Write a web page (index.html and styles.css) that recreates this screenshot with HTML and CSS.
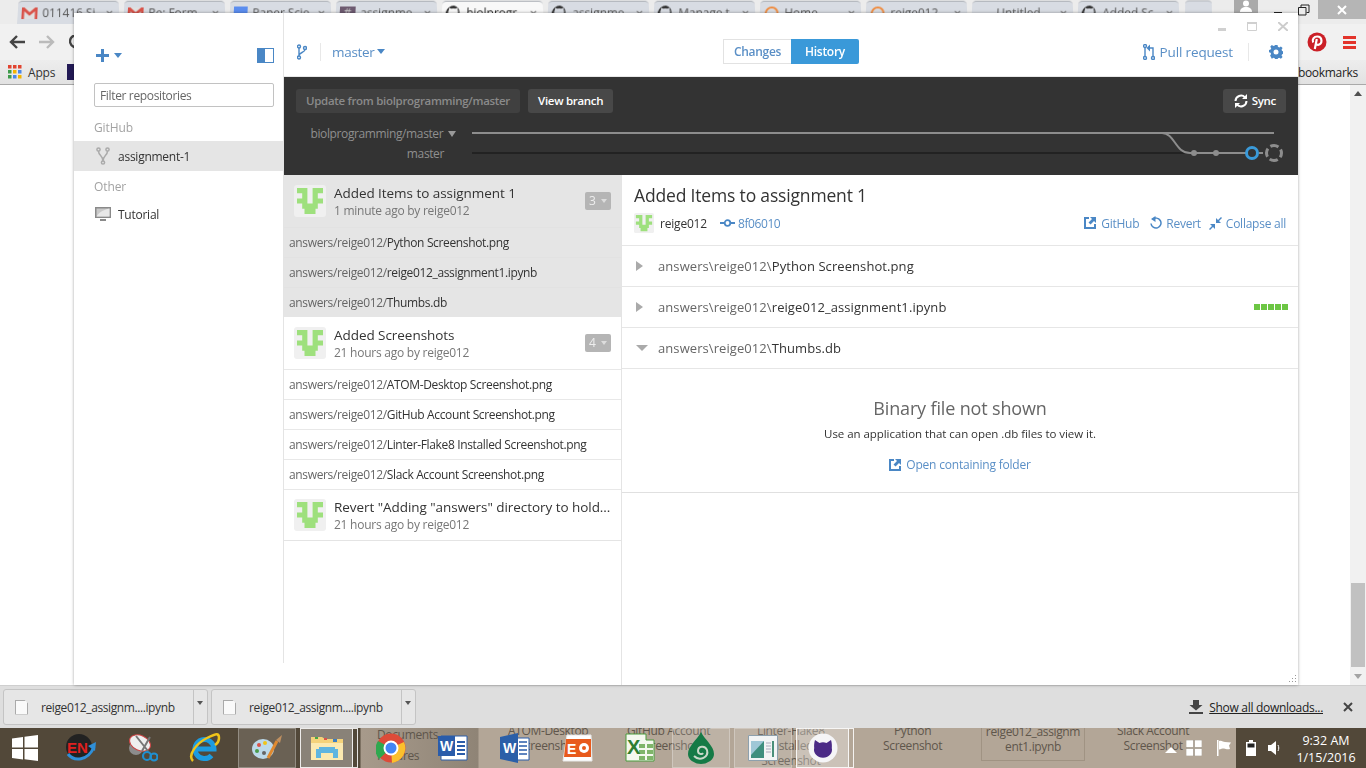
FILE: index.html
```html
<!DOCTYPE html>
<html lang="en">
<head>
<meta charset="utf-8">
<title>GitHub Desktop</title>
<link rel="stylesheet" href="styles.css">
</head>
<body>
<svg class="defs" width="0" height="0" aria-hidden="true">
  <defs>
    <symbol id="identicon" viewBox="0 0 32 32">
      <rect width="32" height="32" rx="3" fill="#f0f0f0"/>
      <path fill="#9ee07d" d="M3 3h10.400v5.200H3zM3 13.400h10.400v5.200H3zM18.600 3H29v5.200H18.600zM18.600 13.400H29v5.200H18.600zM8.200 3h5.200v20.800H8.200zM18.600 3h5.200v20.800h-5.200zM8.200 18.600h15.600v5.200H8.200zM10.500 23.800h11V29h-11z"/>
    </symbol>
    <symbol id="gh" viewBox="0 0 16 16">
      <path fill="#333" d="M8 0a8 8 0 0 0-2.500 15.600V13c-2.200.5-2.700-1-2.700-1-.4-.9-.9-1.200-.9-1.200-.7-.5.100-.5.100-.5.800.1 1.200.8 1.200.8.700 1.200 1.900.9 2.300.7.100-.5.300-.9.500-1.100-1.800-.2-3.600-.9-3.600-4 0-.9.300-1.600.8-2.100-.1-.2-.4-1 .1-2.100 0 0 .7-.2 2.200.8a7.600 7.600 0 0 1 4 0c1.500-1 2.200-.8 2.200-.8.400 1.100.2 1.900.1 2.100.5.600.8 1.300.8 2.100 0 3.100-1.900 3.700-3.700 3.900.3.300.6.800.6 1.500v2.900A8 8 0 0 0 8 0z"/>
    </symbol>
    <symbol id="gm" viewBox="0 0 16 12">
      <path fill="#e0e0e0" d="M0 0h16v12H0z"/>
      <path fill="#d9534a" d="M0 0h2.500L8 5l5.500-5H16v12h-2.600V4L8 8.800 2.600 4v8H0z"/>
    </symbol>
    <symbol id="arc" viewBox="0 0 16 16">
      <path fill="none" stroke="#f08a3c" stroke-width="2" d="M2 8a6 6 0 0 1 12 0"/>
    </symbol>
  </defs>
</svg>

<header class="tabstrip">
  <div class="tabs">
    <div class="tab"><svg class="tab-icon" width="16" height="14"><use href="#gm"/></svg><span class="tab-text">011416 Si</span><span class="tab-x">✕</span></div>
    <div class="tab"><svg class="tab-icon" width="16" height="14"><use href="#gm"/></svg><span class="tab-text">Re: Form</span><span class="tab-x">✕</span></div>
    <div class="tab"><span class="tab-doc"></span><span class="tab-text">Paper Scie</span><span class="tab-x">✕</span></div>
    <div class="tab"><span class="tab-slack">#</span><span class="tab-text">assignme</span><span class="tab-x">✕</span></div>
    <div class="tab tab-active"><svg class="tab-icon" width="16" height="16"><use href="#gh"/></svg><span class="tab-text">biolprogr</span><span class="tab-x">✕</span></div>
    <div class="tab"><svg class="tab-icon" width="16" height="16"><use href="#gh"/></svg><span class="tab-text">assignme</span><span class="tab-x">✕</span></div>
    <div class="tab"><svg class="tab-icon" width="16" height="16"><use href="#gh"/></svg><span class="tab-text">Manage t</span><span class="tab-x">✕</span></div>
    <div class="tab"><svg class="tab-icon" width="16" height="16"><use href="#arc"/></svg><span class="tab-text">Home</span><span class="tab-x">✕</span></div>
    <div class="tab"><svg class="tab-icon" width="16" height="16"><use href="#arc"/></svg><span class="tab-text">reige012</span><span class="tab-x">✕</span></div>
    <div class="tab"><span class="tab-blank"></span><span class="tab-text">Untitled</span><span class="tab-x">✕</span></div>
    <div class="tab"><svg class="tab-icon" width="16" height="16"><use href="#gh"/></svg><span class="tab-text">Added Sc</span><span class="tab-x">✕</span></div>
    <div class="tab tab-new"></div>
  </div>
  <div class="winctl">
    <div class="winctl-user"><svg width="12" height="12" viewBox="0 0 12 12"><circle cx="6" cy="3.500" r="3" fill="#fff"/><path fill="#fff" d="M0 12c0-3.500 2.500-5 6-5s6 1.500 6 5z"/></svg></div>
    <div class="winctl-btn"><svg width="12" height="12" viewBox="0 0 12 12"><path fill="#222" d="M2 8h8v2H2z"/></svg></div>
    <div class="winctl-btn"><svg width="12" height="12" viewBox="0 0 12 12"><path fill="none" stroke="#222" d="M.5 3.500h7.500v7.500H.5zM3 3V1h8v7.500H8.500"/></svg></div>
    <div class="winctl-close"><svg width="10" height="10" viewBox="0 0 10 10"><path stroke="#fff" stroke-width="2" d="M1 1l8 8M9 1l-8 8"/></svg></div>
  </div>
</header>

<nav class="toolbar">
  <div class="nav-left">
    <svg width="16" height="14" viewBox="0 0 16 14"><path fill="none" stroke="#444" stroke-width="2.400" d="M16 7H2M8 1L2 7l6 6"/></svg>
    <svg width="16" height="14" viewBox="0 0 16 14"><path fill="none" stroke="#bbb" stroke-width="2.400" d="M0 7h14M8 1l6 6-6 6"/></svg>
    <svg width="14" height="14" viewBox="0 0 14 14"><path fill="none" stroke="#444" stroke-width="2.400" d="M12 3a6 6 0 1 0 1 4"/></svg>
  </div>
  <div class="nav-right">
    <svg width="20" height="20" viewBox="0 0 20 20"><circle cx="10" cy="10" r="9.500" fill="#cb2027"/><path fill="none" stroke="#fff" stroke-width="2.200" d="M6.200 10.500c-1.500-3 .8-6 4-6 5.500 0 5.500 8 1 8.300-1.200 0-2-.7-2-1.300M9.800 7l-2 10"/></svg>
    <svg width="14" height="14" viewBox="0 0 14 14"><path fill="#e3342b" d="M0 1h13v3H0zM0 6h13v3H0zM0 11h13v3H0z"/></svg>
  </div>
</nav>

<nav class="bookmarks">
  <div class="bm-left">
    <svg width="14" height="14" viewBox="0 0 14 14"><path fill="#e1432f" d="M0 0h3.500v3.500H0z"/><path fill="#e1432f" d="M5 0h3.500v3.500H5z"/><path fill="#e1432f" d="M10 0h3.500v3.500H10z"/><path fill="#3f9b4b" d="M0 5h3.500v3.500H0z"/><path fill="#f4b400" d="M5 5h3.500v3.500H5z"/><path fill="#4a86e8" d="M10 5h3.500v3.500H10z"/><path fill="#3f9b4b" d="M0 10h3.500v3.500H0z"/><path fill="#4a86e8" d="M5 10h3.500v3.500H5z"/><path fill="#f4b400" d="M10 10h3.500v3.500H10z"/></svg>
    <span>Apps</span>
    <span class="bm-fav"></span>
  </div>
  <span class="bm-right">bookmarks</span>
</nav>

<main class="page">
  <div class="page-body"></div>
  <div class="scrollbar">
    <span class="sb-up"></span>
    <span class="sb-thumb"></span>
    <span class="sb-down"></span>
  </div>
</main>

<footer class="downloads">
  <div class="dl-item"><span class="dl-file"></span><span class="dl-name">reige012_assignm....ipynb</span><span class="dl-more"></span></div>
  <div class="dl-item"><span class="dl-file"></span><span class="dl-name">reige012_assignm....ipynb</span><span class="dl-more"></span></div>
  <div class="dl-spacer"></div>
  <svg class="dl-icon" width="14" height="14" viewBox="0 0 14 14"><path fill="#444" d="M4 0h6v5h3.500L7 10.500.5 5H4zM0 12h14v2H0z"/></svg>
  <a class="dl-all">Show all downloads...</a>
  <svg class="dl-close" width="10" height="10" viewBox="0 0 10 10"><path stroke="#444" stroke-width="2" d="M1 1l8 8M9 1l-8 8"/></svg>
</footer>

<div class="taskbar">
  <div class="desktop">
    <span class="dt dt-docs">Documents</span>
    <span class="dt dt-pics">Pictures</span>
    <span class="dt dt-atom">ATOM-Desktop<br>Screenshot</span>
    <span class="dt dt-gh">GitHub Account<br>Screenshot</span>
    <span class="dt dt-lint">Linter-Flake8<br>Installed<br>Screenshot</span>
    <span class="dt dt-py">Python<br>Screenshot</span>
    <span class="dt dt-ipy">reige012_assignm<br>ent1.ipynb</span>
    <span class="dt dt-slack">Slack Account<br>Screenshot</span>
  </div>
  <div class="task-icons">
    <div class="ti ti-win"><svg width="26" height="26" viewBox="0 0 26 26"><path fill="#fff" d="M0 3.500l11-1.500v10.500H0zM12.500 1.800L26 0v12.500H12.500zM0 14h11v10.500L0 23zM12.500 14H26v12l-13.500-1.800z"/></svg></div>
    <div class="ti"><svg width="32" height="30" viewBox="0 0 32 30"><circle cx="14" cy="14" r="13" fill="#222"/><path fill="none" stroke="#2f8fd8" stroke-width="3" d="M3 21c6 8 20 7 26-7"/><path fill="#2f8fd8" d="M31 9l-1 9-7-5z"/><text x="2" y="20" class="ti-en">EN</text></svg></div>
    <div class="ti"><svg width="30" height="30" viewBox="0 0 30 30"><ellipse cx="8" cy="15" rx="7" ry="7" fill="#8c8c8c"/><ellipse cx="12" cy="10" rx="11" ry="7.500" transform="rotate(25 12 10)" fill="#efefef" stroke="#c44"/><path stroke="#777" stroke-width="2" d="M8 3l12 15M22 4l-8 14"/><circle cx="19" cy="23" r="4" fill="none" stroke="#1f8fd0" stroke-width="2.200"/><circle cx="26" cy="24" r="3.500" fill="none" stroke="#1f8fd0" stroke-width="2.200"/></svg></div>
    <div class="ti"><svg width="32" height="30" viewBox="0 0 32 30"><path fill="none" stroke="#1c9ce0" stroke-width="5" d="M7 16h18a9.500 9.500 0 1 0-2.500 6.500"/><path fill="none" stroke="#f0c419" stroke-width="2.500" d="M4 28C-2 22 8 10 18 5s12-5 12 0-3 6-4 7"/></svg></div>
    <div class="ti ti-open"><svg width="32" height="28" viewBox="0 0 32 28"><ellipse cx="12" cy="15" rx="11" ry="10" fill="#bcd9ea"/><circle cx="8" cy="11" r="2" fill="#d9534a"/><circle cx="14" cy="9" r="2" fill="#f0c419"/><circle cx="6" cy="17" r="2" fill="#4a9b4b"/><circle cx="13" cy="19" r="2" fill="#666"/><path stroke="#e08a30" stroke-width="3" d="M17 24l9-17"/><path fill="#c09060" d="M25 6l6-5-2 8z"/></svg></div>
    <div class="ti ti-active"><svg width="32" height="28" viewBox="0 0 32 28"><path fill="#f4d27a" d="M0 3h11l3 2h18v21H0z"/><path fill="#fbe9b0" d="M0 9h32v17H0z"/><path fill="#5fb5e0" d="M8 13h16v2H8zM5 15h22v9h-5v-5H10v5H5z"/><path fill="#45a645" d="M4 3h3v2H4z"/><path fill="#d9534a" d="M13 4h3v2h-3z"/><path fill="#3c7fc2" d="M22 5h4v3h-4z"/></svg></div>
    <div class="ti"><svg width="30" height="30" viewBox="0 0 30 30"><circle cx="15" cy="15" r="14.500" fill="#dd4b39"/><path fill="#2fa84f" d="M15 15L3 26A15 15 0 0 1 2 8z"/><path fill="#fbc02d" d="M15 15l13-6a15 15 0 0 1-12 21z"/><circle cx="15" cy="15" r="7.500" fill="#fff"/><circle cx="15" cy="15" r="5.500" fill="#4285f4"/></svg></div>
    <div class="ti"><svg width="30" height="30" viewBox="0 0 30 30"><path fill="#fff" stroke="#2a5caa" d="M3 3h26v24H3z"/><path fill="#2a5caa" d="M0 3h17v20H0z"/><text x="2" y="18" class="ti-letter">W</text><path stroke="#2a5caa" stroke-width="2" d="M19 9h8M19 13h8M19 17h8M19 21h8"/></svg></div>
    <div class="ti"><svg width="30" height="30" viewBox="0 0 30 30"><path fill="#fff" stroke="#2a5caa" d="M12 5h17v22H12z"/><path fill="#2b5fa8" d="M0 4l18-4v30L0 26z"/><text x="3" y="20" class="ti-letter">W</text><path stroke="#2a5caa" stroke-width="1.500" d="M19 9h8M19 13h8M19 17h8M19 21h8"/></svg></div>
    <div class="ti"><svg width="32" height="30" viewBox="0 0 32 30"><path fill="#fff" stroke="#e8e8e8" d="M6 2h24l1 26H2z"/><path fill="#e85a1c" d="M5 6h25v18H3z"/><text x="6" y="21" class="ti-letter">E</text><circle cx="23" cy="15" r="5" fill="#fff"/><circle cx="23" cy="15" r="2" fill="#e85a1c"/></svg></div>
    <div class="ti"><svg width="32" height="30" viewBox="0 0 32 30"><path fill="#f4f8ef" stroke="#4a9b3c" d="M3 1h20v6h8v21H3z"/><path fill="#7fb56a" d="M16 11h6v4h-6zM24 11h6v4h-6zM16 17h6v4h-6zM24 17h6v4h-6zM16 23h6v4h-6zM24 23h6v4h-6z"/><text x="4" y="21" class="ti-letter ti-x">X</text></svg></div>
    <div class="ti ti-open"><svg width="26" height="32" viewBox="0 0 26 32"><path fill="#157a46" d="M13 0c4 8 13 14 13 22a13 10 0 0 1-26 0C0 14 9 8 13 0z"/><path fill="none" stroke="#c8d8c8" stroke-width="2" d="M6 24c6 6 15 1 13-6-2-5-9-4-9 1 0 3 4 4 5 2"/></svg></div>
    <div class="ti ti-open"><svg width="30" height="26" viewBox="0 0 30 26"><path fill="#f2f4f5" stroke="#8da0ad" d="M.5.5h29v25H.5z"/><path fill="#3f8f7e" d="M3 6h13v17H3z"/><path fill="#9fc7d6" d="M3 6h13L3 20z"/><path stroke="#4a8f7a" stroke-width="2" d="M25 6v16"/><path stroke="#aab" d="M18 8h5M18 11h5M18 14h5M18 17h5"/></svg></div>
    <div class="ti ti-active"><svg width="30" height="30" viewBox="0 0 30 30"><circle cx="15" cy="15" r="14.500" fill="#f5f5f7"/><path fill="#4b2a86" d="M7 7l4.500 3a10 10 0 0 1 7 0L23 7c1 3 1 6 .8 8a9 8 0 1 1-17.600 0c-.2-2-.2-5 .8-8z"/></svg></div>
  </div>
  <div class="tray-light">
    <svg class="tray-caret" width="12" height="6" viewBox="0 0 12 6"><path fill="#fff" d="M6 0l6 6H0z"/></svg>
    <svg width="16" height="16" viewBox="0 0 16 16"><path fill="#fff" stroke="#8b8072" stroke-width=".500" d="M0 0h7.500v7.500H0zM8.500 0H16v7.500H8.500zM0 8.500h7.500V16H0zM8.500 8.500H16V16H8.500z"/></svg>
    <svg width="16" height="16" viewBox="0 0 16 16"><path fill="#fff" d="M1 0h1.500v16H1z"/><path fill="#fff" d="M3 1c3-1 4 1 6 1l6 .5-2 3 1 3.500c-3 .5-4 0-6-.5-2 0-3 .5-5 1z"/></svg>
  </div>
  <div class="tray-dark">
    <svg width="10" height="16" viewBox="0 0 10 16"><path fill="#fff" d="M3 0h4v2h3v14H0V2h3z"/><path fill="#222" d="M1.500 3.500h7v4h-7z"/></svg>
    <svg width="14" height="14" viewBox="0 0 14 14"><path fill="#fff" d="M0 4h3l5-4v14l-5-4H0z"/><path fill="none" stroke="#fff" d="M10 4c1 2 1 4 0 6"/></svg>
    <div class="clock"><span>9:32 AM</span><span>1/15/2016</span></div>
  </div>
</div>

<section class="app">
  <aside class="sidebar">
    <div class="side-top">
      <div class="add"><svg width="13" height="13" viewBox="0 0 13 13"><path fill="#4a87c5" d="M5 0h3v5h5v3H8v5H5V8H0V5h5z"/></svg><span class="caret caret-blue"></span></div>
      <svg width="17" height="15" viewBox="0 0 17 15"><path fill="#4a87c5" d="M0 0h17v15H0z"/><path fill="#fff" d="M8 1h8v13H8z"/></svg>
    </div>
    <div class="filter">Filter repositories</div>
    <div class="group">GitHub</div>
    <div class="repo repo-on">
      <svg width="14" height="18" viewBox="0 0 14 18"><g fill="none" stroke="#aaa" stroke-width="1.500"><circle cx="2.500" cy="2.500" r="1.600"/><circle cx="11.500" cy="2.500" r="1.600"/><circle cx="7" cy="15.500" r="1.600"/><path d="M2.500 4c0 5 4.500 4 4.500 10M11.500 4C11.500 9 7 8 7 14"/></g></svg>
      <span>assignment-1</span>
    </div>
    <div class="group group-other">Other</div>
    <div class="repo">
      <svg width="16" height="14" viewBox="0 0 16 14"><path fill="#8a8a8a" d="M0 0h16v11H0z"/><path fill="#c9c9c9" d="M1.500 1.500h13v8h-13z"/><path fill="#e8e8e8" d="M1.500 9.500c3-5 8-7 13-8v8z"/><path fill="#8a8a8a" d="M5 12h6v2H5z"/></svg>
      <span>Tutorial</span>
    </div>
  </aside>

  <div class="main">
    <div class="appbar">
      <svg class="branch-ico" width="10" height="16" viewBox="0 0 10 16"><g fill="none" stroke="#4a87c5" stroke-width="1.400"><circle cx="2" cy="2.500" r="1.500"/><circle cx="8" cy="4" r="1.500"/><circle cx="2" cy="13.500" r="1.500"/><path d="M2 4v8M8 5.500c0 3-6 3-6 6"/></g></svg>
      <span class="bar-div"></span>
      <span class="branch">master</span><span class="caret caret-blue caret-sm"></span>
      <div class="seg">
        <span class="seg-a">Changes</span>
        <span class="seg-b">History</span>
      </div>
      <div class="bar-right">
        <svg width="12" height="16" viewBox="0 0 12 16"><g fill="none" stroke="#4a87c5" stroke-width="1.400"><circle cx="2" cy="14" r="1.500"/><circle cx="10" cy="14" r="1.500"/><circle cx="2" cy="2" r="1.500"/><path d="M2 3.500v9M10 12.500V4H6"/></g><path fill="#4a87c5" d="M7 .5v7L3.500 4z"/></svg>
        <span class="pull">Pull request</span>
        <span class="bar-div bar-div2"></span>
        <svg width="14" height="14" viewBox="0 0 14 14"><path fill="#4a87c5" d="M5.700 0h2.600l.4 2 1.400.6L11.900 1.500l1.800 1.800-1.100 1.800.6 1.400 2 .4-.1 2.600-1.900.4-.6 1.400 1.100 1.700-1.800 1.800-1.800-1.100-1.400.6-.4 1.900H5.700l-.4-1.900-1.400-.6-1.800 1.100L.3 11.400l1.100-1.700L.8 8.300-1 7.900V5.300l1.900-.4.600-1.400L.4 1.800 2.100 0l1.800 1.100 1.400-.6z" transform="scale(.93) translate(.9 0)"/><circle cx="7" cy="7" r="2.500" fill="#fff"/></svg>
      </div>
      <div class="appctl">
        <svg class="ctl-min" width="8" height="3" viewBox="0 0 8 3"><path fill="#d0d0d0" d="M0 0h8v3H0z"/></svg>
        <svg width="10" height="9" viewBox="0 0 10 9"><path fill="none" stroke="#d0d0d0" d="M.5 1.500h9v7h-9z"/><path fill="#d0d0d0" d="M0 0h10v2H0z"/></svg>
        <svg width="10" height="9" viewBox="0 0 10 9"><path stroke="#ccc" stroke-width="2" d="M0 0l10 9M10 0L0 9"/></svg>
      </div>
    </div>

    <div class="darkbar">
      <div class="dark-btns">
        <span class="dbtn dbtn-off">Update from biolprogramming/master</span>
        <span class="dbtn">View branch</span>
        <span class="dbtn dbtn-sync"><svg width="14" height="14" viewBox="0 0 14 14"><path fill="none" stroke="#fff" stroke-width="2" d="M1.500 7a5.500 5.500 0 0 1 9.500-3.600M12.500 7A5.500 5.500 0 0 1 3 10.600"/><path fill="#fff" d="M13 0v5H8zM1 14V9h5z"/></svg>Sync</span>
      </div>
      <div class="graph">
        <div class="graph-labels">
          <span>biolprogramming/master <i class="caret caret-grey"></i></span>
          <span class="graph-master">master</span>
        </div>
        <svg class="graph-svg" width="826" height="36" viewBox="0 0 826 36">
          <path fill="none" stroke="#222" stroke-width="2" d="M0 26h720"/>
          <path fill="none" stroke="#8d8d8d" stroke-width="2" d="M0 6h802M690 6c13 0 13 20 28 20h56"/>
          <circle cx="722" cy="26" r="3" fill="#8d8d8d"/>
          <circle cx="744" cy="26" r="3" fill="#8d8d8d"/>
          <circle cx="780" cy="26" r="5.500" fill="#333" stroke="#3a9ad9" stroke-width="3"/>
          <path stroke="#8d8d8d" stroke-width="2" d="M787 26h4"/>
          <circle class="graph-next" cx="802" cy="26" r="7.500" fill="#333" stroke="#8d8d8d" stroke-width="3"/>
        </svg>
      </div>
    </div>

    <div class="panes">
      <div class="commits">
        <article class="commit commit-on">
          <svg class="avatar" width="32" height="32"><use href="#identicon"/></svg>
          <div class="commit-text"><div class="commit-title">Added Items to assignment 1</div><div class="commit-sub">1 minute ago by reige012</div></div>
          <span class="count">3 <i class="caret caret-white"></i></span>
        </article>
        <div class="files files-on">
          <div class="file"><span class="dim">answers/reige012/</span>Python Screenshot.png</div>
          <div class="file"><span class="dim">answers/reige012/</span>reige012_assignment1.ipynb</div>
          <div class="file"><span class="dim">answers/reige012/</span>Thumbs.db</div>
        </div>
        <article class="commit">
          <svg class="avatar" width="32" height="32"><use href="#identicon"/></svg>
          <div class="commit-text"><div class="commit-title">Added Screenshots</div><div class="commit-sub">21 hours ago by reige012</div></div>
          <span class="count">4 <i class="caret caret-white"></i></span>
        </article>
        <div class="files">
          <div class="file"><span class="dim">answers/reige012/</span>ATOM-Desktop Screenshot.png</div>
          <div class="file"><span class="dim">answers/reige012/</span>GitHub Account Screenshot.png</div>
          <div class="file"><span class="dim">answers/reige012/</span>Linter-Flake8 Installed Screenshot.png</div>
          <div class="file"><span class="dim">answers/reige012/</span>Slack Account Screenshot.png</div>
        </div>
        <article class="commit commit-last">
          <svg class="avatar" width="32" height="32"><use href="#identicon"/></svg>
          <div class="commit-text"><div class="commit-title">Revert "Adding "answers" directory to hold...</div><div class="commit-sub">21 hours ago by reige012</div></div>
        </article>
      </div>

      <div class="detail">
        <div class="detail-head">
          <h1 class="detail-title">Added Items to assignment 1</h1>
          <div class="detail-meta">
            <svg width="20" height="20"><use href="#identicon"/></svg>
            <span class="author">reige012</span>
            <svg class="sha-ico" width="15" height="8" viewBox="0 0 15 8"><circle cx="7.500" cy="4" r="2.800" fill="none" stroke="#4a87c5" stroke-width="1.800"/><path stroke="#4a87c5" stroke-width="1.800" d="M0 4h4.500M10.500 4H15"/></svg>
            <span class="sha">8f06010</span>
            <div class="actions">
              <svg class="act-first" width="12" height="12" viewBox="0 0 12 12"><path fill="none" stroke="#4a87c5" stroke-width="2" d="M5 1H1v10h10V7"/><path fill="#4a87c5" d="M6 0h6v6L10 4 6.500 7.500 4.500 5.500 8 2z"/></svg>
              <span class="act">GitHub</span>
              <svg class="act-rev" width="12" height="14" viewBox="0 0 12 14"><path fill="none" stroke="#4a87c5" stroke-width="1.500" d="M2.500 3.500A5 5 0 1 1 1 7.500"/><path fill="#4a87c5" d="M5.500 0v6L1 3z"/></svg>
              <span class="act">Revert</span>
              <svg class="act-col" width="13" height="13" viewBox="0 0 13 13"><path fill="#4a87c5" d="M7 1v5h5L10 4l3-3-1-1-3 3zM6 7v5L4 10l-3 3-1-1 3-3-2-2z"/></svg>
              <span class="act">Collapse all</span>
            </div>
          </div>
        </div>
        <div class="drow"><span class="tri tri-right"></span><span><span class="dim">answers\reige012\</span>Python Screenshot.png</span></div>
        <div class="drow"><span class="tri tri-right"></span><span><span class="dim">answers\reige012\</span>reige012_assignment1.ipynb</span>
          <span class="stat"><i></i><i></i><i></i><i></i><i></i></span></div>
        <div class="drow"><span class="tri tri-down"></span><span><span class="dim">answers\reige012\</span>Thumbs.db</span></div>
        <div class="binary">
          <div class="bin-title">Binary file not shown</div>
          <div class="bin-sub">Use an application that can open .db files to view it.</div>
          <div class="bin-link"><svg width="12" height="12" viewBox="0 0 12 12"><path fill="none" stroke="#4a87c5" stroke-width="2" d="M5 1H1v10h10V7"/><path fill="#4a87c5" d="M6 0h6v6L10 4 6.500 7.500 4.500 5.500 8 2z"/></svg><span>Open containing folder</span></div>
        </div>
      </div>
    </div>
    <svg class="grip" width="8" height="8" viewBox="0 0 8 8"><path fill="#999" d="M6 0h1v1H6zM3 3h1v1H3zM6 3h1v1H6zM0 6h1v1H0zM3 6h1v1H3zM6 6h1v1H6z"/></svg>
  </div>
</section>
</body>
</html>
```
FILE: styles.css
```css
* { box-sizing: border-box; }
html, body { margin: 0; height: 100%; }
body {
  position: relative;
  width: 1366px;
  height: 768px;
  overflow: hidden;
  display: flex;
  flex-direction: column;
  background: #fff;
  color: #333;
  font-family: "Open Sans", "Liberation Sans", sans-serif;
  font-size: 12px;
}
.defs { position: absolute; }
i { font-style: normal; }

/* browser chrome behind the app */
.tabstrip {
  height: 24px;
  flex: none;
  display: flex;
  justify-content: space-between;
  background: #ececec;
}
.tabs { display: flex; padding-left: 17px; gap: 3px; align-items: flex-start; }
.tab {
  position: relative;
  width: 103px;
  height: 24px;
  display: flex;
  align-items: center;
  gap: 5px;
  padding: 0 6px 0 4px;
  background: #d8dce3;
  border-top: 1px solid #aeb2b8;
  border-radius: 4px 4px 0 0;
  color: #555;
  font-size: 12px;
  white-space: nowrap;
  transform: perspective(80px) rotateX(6deg);
  transform-origin: bottom;
}
.tab-active { background: #f8f8f8; color: #222; }
.tab-new { width: 27px; height: 17px; margin-left: 2px; }
.tab-text { flex: 1; overflow: hidden; }
.tab-x { color: #666; font-size: 10px; }
.tab-icon { flex: none; }
.tab-doc { width: 14px; height: 14px; flex: none; background: #5b8def; }
.tab-slack { width: 16px; height: 14px; flex: none; background: #6d5a70; color: #ccc; text-align: center; line-height: 14px; }
.tab-blank { width: 16px; flex: none; }
.winctl { display: flex; height: 19px; align-items: flex-start; }
.winctl-user { width: 24px; height: 14px; background: #aaa; display: flex; justify-content: center; margin-right: 7px; }
.winctl-btn { width: 26px; height: 19px; display: flex; align-items: center; justify-content: center; }
.winctl-close { width: 48px; height: 19px; margin-left: 1px; background: #b5b5b5; display: flex; align-items: center; justify-content: center; }

.toolbar {
  height: 36px;
  flex: none;
  display: flex;
  align-items: center;
  justify-content: space-between;
  padding: 0 9px 0 9px;
  background: #f1f1f1;
}
.nav-left { display: flex; gap: 14px; align-items: center; }
.nav-right { display: flex; gap: 16px; align-items: center; }
.bookmarks {
  height: 25px;
  flex: none;
  display: flex;
  align-items: center;
  justify-content: space-between;
  padding: 0 8px;
  background: linear-gradient(#ededed, #e2e2e2);
  border-bottom: 1px solid #a9a9a9;
  color: #333;
}
.bm-left { display: flex; align-items: center; gap: 6px; letter-spacing: -.2px; }
.bm-fav { width: 16px; height: 16px; margin-left: 6px; background: #221a55; }
.bm-right { color: #222; letter-spacing: -.3px; }

.page { flex: 1; display: flex; min-height: 0; }
.page-body { flex: 1; }
.scrollbar {
  width: 16px;
  display: flex;
  flex-direction: column;
  align-items: center;
  background: #f1f1f1;
  padding: 6px 0 6px;
}
.sb-up { width: 0; height: 0; border: 4px solid transparent; border-top: 0; border-bottom: 5px solid #505050; }
.sb-thumb { width: 14px; height: 84px; margin-top: auto; margin-bottom: 7px; background: #c1c1c1; }
.sb-down { width: 0; height: 0; border: 4px solid transparent; border-bottom: 0; border-top: 5px solid #a3a3a3; }

.downloads {
  height: 43px;
  flex: none;
  display: flex;
  align-items: center;
  padding: 0 13px 0 3px;
  gap: 3px;
  background: #dedede;
  border-top: 1px solid #cfcfcf;
}
.dl-item {
  width: 205px;
  height: 36px;
  display: flex;
  align-items: center;
  background: #e6e6e6;
  border: 1px solid #c4c4c4;
  border-radius: 3px;
  color: #333;
}
.dl-file {
  width: 13px; height: 15px; margin-left: 11px; flex: none;
  background: #fafafa;
  clip-path: polygon(0 0, 70% 0, 100% 25%, 100% 100%, 0 100%);
  box-shadow: inset 0 0 0 1px #aaa;
}
.dl-name { flex: 1; margin-left: 13px; letter-spacing: -.4px; }
.dl-more {
  width: 14px; height: 100%; flex: none; border-left: 1px solid #c4c4c4; position: relative;
}
.dl-more::after {
  content: ""; position: absolute; left: 3px; top: 11px;
  border: 3.500px solid transparent; border-bottom: 0; border-top: 4px solid #555;
}
.dl-spacer { flex: 1; }
.dl-icon { margin-right: 3px; }
.dl-all { color: #222; text-decoration: underline; margin-right: 17px; letter-spacing: -.3px; }

.taskbar {
  position: relative;
  height: 40px;
  flex: none;
  display: flex;
  background: linear-gradient(90deg, #524839 0, #524839 360px, #a79a8b 361px, #8f8476 478px, #b3a697 479px, #b3a697 100%);
  color: #fff;
  overflow: hidden;
}
.desktop { position: absolute; inset: 0; }
.dt { position: absolute; top: -5px; color: #5f564c; font-size: 12px; line-height: 15px; letter-spacing: -.35px; text-align: center; white-space: nowrap; }
.dt-docs { left: 377px; top: -1px; }
.dt-pics { left: 377px; top: 20px; }
.dt-atom { left: 508px; }
.dt-gh { left: 627px; }
.dt-lint { left: 757px; }
.dt-py { left: 883px; }
.dt-ipy { left: 981px; width: 104px; height: 38px; border: 1px solid #a09383; }
.dt-slack { left: 1117px; }
.task-icons {
  position: relative;
  display: grid;
  grid-template-columns: 50px repeat(13, 62px);
  width: 856px;
}
.ti { display: flex; align-items: center; justify-content: center; height: 40px; position: relative; }
.ti-open { margin: 0 2px; background: rgba(255,255,255,.14); border: 1px solid rgba(255,255,255,.28); }
.ti-active { margin: 0 7px 0 2px; background: rgba(255,255,255,.32); border: 1px solid rgba(255,255,255,.85); }
.ti-active::after {
  content: ""; position: absolute; top: -1px; bottom: -1px; right: -6px; width: 4px;
  border: 1px solid rgba(255,255,255,.85); border-left: 0;
}
.ti-en { font: 700 15px "Liberation Sans", sans-serif; fill: #e02020; }
.ti-letter { font: 700 14px "Liberation Sans", sans-serif; fill: #fff; }
.ti-x { fill: #2e7d32; font-size: 20px; }
.tray-light { position: relative; margin-left: auto; display: flex; align-items: center; gap: 14px; padding-right: 4px; }
.tray-caret { margin-right: -5px; margin-top: 4px; }
.tray-dark {
  position: relative;
  width: 130px;
  display: flex;
  align-items: center;
  gap: 12px;
  padding-left: 10px;
  background: #524839;
}
.clock { display: flex; flex-direction: column; align-items: center; flex: 1; font-size: 12.500px; line-height: 17px; padding: 2px 8px 0 0; }

/* app window */
.app {
  position: absolute;
  left: 74px;
  top: 13px;
  width: 1224px;
  height: 672px;
  display: flex;
  background: #fff;
  box-shadow: 0 0 3px rgba(0,0,0,.35);
}
.sidebar { width: 210px; flex: none; margin-bottom: 22px; border-right: 1px solid #e4e4e4; }
.side-top { display: flex; justify-content: space-between; align-items: center; padding: 35px 9px 0 22px; }
.add { display: flex; align-items: center; gap: 5px; }
.caret { display: inline-block; width: 0; height: 0; border: 3.500px solid transparent; border-bottom: 0; }
.caret-blue { border-top: 5px solid #4a87c5; border-left-width: 4px; border-right-width: 4px; }
.caret-grey { border-top: 6px solid #999; border-left-width: 4px; border-right-width: 4px; margin-left: 2px; vertical-align: 1px; }
.caret-white { border-top: 4px solid #ddd; vertical-align: 2px; margin-left: 2px; }
.filter {
  margin: 20px 9px 0 20px;
  height: 24px;
  border: 1px solid #c2c2c2;
  border-radius: 2px;
  padding-left: 5px;
  line-height: 23px;
  color: #666;
  letter-spacing: -.35px;
}
.group { margin: 10px 0 0 20px; height: 24px; line-height: 22px; color: #a3a3a3; letter-spacing: -.1px; }
.group-other { margin-top: 5px; height: 23px; }
.repo { height: 30px; display: flex; align-items: center; gap: 7px; padding-left: 21px; letter-spacing: -.25px; color: #333; }
.repo-on { background: #e5e5e5; }
.repo svg { flex: none; width: 16px; }

.main { flex: 1; min-width: 0; display: flex; flex-direction: column; position: relative; }
.appbar { height: 64px; flex: none; position: relative; display: flex; align-items: center; padding: 14px 15px 0 13px; border-bottom: 1px solid #e8e8e8; }
.branch-ico { margin-right: 13px; }
.bar-div { width: 1px; height: 18px; background: #e8e8e8; margin-right: 11px; }
.branch { color: #5a8fc6; font-size: 13.500px; letter-spacing: -.3px; margin-right: 2px; }
.seg { position: absolute; left: 439px; top: 26px; display: flex; height: 25px; font-weight: 600; letter-spacing: -.3px; text-align: center; }
.seg-a { width: 68px; border: 1px solid #e2e2e2; border-right: 0; color: #5a8fc6; line-height: 24px; }
.seg-b { width: 68px; background: #3a99d9; color: #fff; border-radius: 0 2px 2px 0; line-height: 26px; }
.bar-right { margin-left: auto; display: flex; align-items: center; }
.pull { color: #5a8fc6; font-size: 13.500px; letter-spacing: -.15px; margin-left: 5px; }
.bar-div2 { margin: 0 20px 0 15px; }
.appctl { position: absolute; right: 10px; top: 9px; display: flex; align-items: flex-start; gap: 21px; }
.ctl-min { margin-top: 6px; }

.darkbar { height: 98px; flex: none; display: flex; flex-direction: column; background: #333; padding: 12px 12px 0 12px; }
.dark-btns { display: flex; gap: 8px; }
.dbtn { height: 24px; padding: 0 10px 1px; display: flex; align-items: center; gap: 4px; border-radius: 3px; background: #484848; color: #fff; font-weight: 600; font-size: 11.500px; letter-spacing: -.3px; }
.dbtn-off { background: #404040; color: #8a8a8a; }
.dbtn-sync { margin-left: auto; padding: 0 10px 1px 11px; }
.graph { display: flex; margin: 5px -12px 0; }
.graph-labels { width: 172px; padding-top: 6px; display: flex; flex-direction: column; align-items: flex-end; color: #8f8f8f; line-height: 20px; letter-spacing: -.38px; flex: none; }
.graph-master { padding-right: 12px; }
.graph-svg { margin-left: 16px; margin-top: 9px; flex: none; }
.graph-next { stroke-dasharray: 8.500 3.280; stroke-dashoffset: 4; }

.panes { flex: 1; display: flex; min-height: 0; }
.commits { width: 338px; flex: none; border-right: 1px solid #e4e4e4; }
.commit { height: 52px; display: flex; align-items: center; padding: 0 10px; gap: 8px; background: #fff; }
.commit-last { border-top: 1px solid #e8e8e8; border-bottom: 1px solid #e4e4e4; }
.commit-on, .files-on { background: #e5e5e5; }
.avatar { flex: none; }
.commit-text { flex: 1; min-width: 0; white-space: nowrap; overflow: hidden; padding-top: 1px; }
.commit-title { font-size: 13.500px; letter-spacing: -.05px; line-height: 18px; color: #333; overflow: hidden; }
.commit-sub { color: #777; line-height: 18px; letter-spacing: -.25px; }
.count { width: 26px; height: 18px; background: #b5b5b5; border-radius: 2px; color: #eee; text-align: center; line-height: 18px; flex: none; }
.file { height: 30px; padding-left: 5px; line-height: 29px; border-top: 1px solid #e8e8e8; letter-spacing: -.35px; color: #333; white-space: nowrap; }
.files-on .file { border-top-color: #e2e2e2; }
.dim { color: #666; }

.detail { flex: 1; min-width: 0; }
.detail-head { height: 70px; padding: 7px 12px 0 12px; }
.detail-title { margin: 0; font-size: 17.500px; font-weight: 400; line-height: 27px; letter-spacing: -.17px; color: #333; }
.detail-meta { display: flex; align-items: center; margin-top: 4px; height: 20px; }
.author { margin-left: 6px; letter-spacing: -.2px; }
.sha-ico { margin-left: 13px; }
.sha { margin-left: 3px; color: #5a8fc6; letter-spacing: -.4px; }
.actions { margin-left: auto; display: flex; align-items: center; gap: 4px; }
.act { color: #5a8fc6; letter-spacing: -.25px; }
.act-first { margin-right: 1px; }
.act-rev { margin-left: 7px; }
.act-col { margin-left: 4px; }
.drow { height: 41px; display: flex; align-items: center; padding: 0 10px 0 14px; border-top: 1px solid #e6e6e6; font-size: 13px; color: #333; letter-spacing: .08px; }
.drow .dim { color: #666; }
.tri { flex: none; height: 0; width: 0; border: solid transparent; }
.tri-right { border-width: 5.500px 0 5.500px 7px; border-left-color: #aaa; margin-right: 15px; }
.tri-down { border-width: 6px 6px 0; border-top-color: #aaa; margin-right: 10px; }
.stat { margin-left: auto; display: flex; gap: 1px; }
.stat i { width: 6px; height: 6px; background: #6cc644; }
.binary { height: 125px; border-top: 1px solid #e6e6e6; border-bottom: 1px solid #e0e0e0; text-align: center; padding-top: 26px; }
.bin-title { font-size: 18px; line-height: 26px; color: #666; letter-spacing: -.15px; }
.bin-sub { font-size: 11.500px; line-height: 18px; margin-top: 4px; letter-spacing: -.05px; }
.bin-link { display: flex; align-items: center; justify-content: center; gap: 5px; margin-top: 13px; color: #5a8fc6; letter-spacing: -.2px; }
.grip { position: absolute; right: 1px; bottom: 2px; }
```
